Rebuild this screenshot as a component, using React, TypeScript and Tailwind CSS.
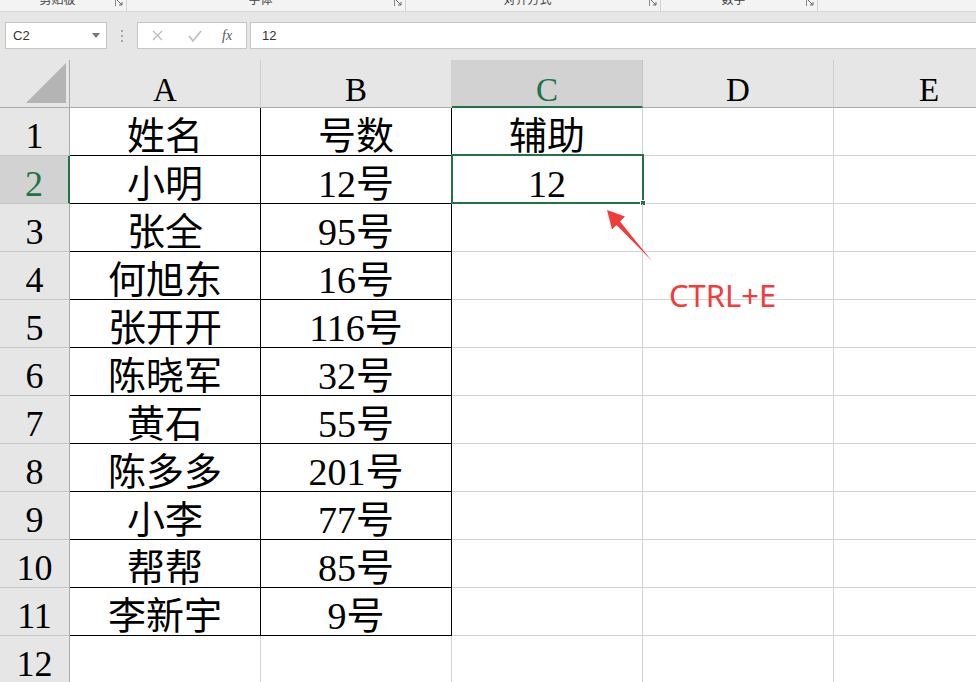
import React from "react";

const rows: [string, string, string][] = [
  ["姓名", "号数", "辅助"],
  ["小明", "12号", "12"],
  ["张全", "95号", ""],
  ["何旭东", "16号", ""],
  ["张开开", "116号", ""],
  ["陈晓军", "32号", ""],
  ["黄石", "55号", ""],
  ["陈多多", "201号", ""],
  ["小李", "77号", ""],
  ["帮帮", "85号", ""],
  ["李新宇", "9号", ""],
  ["", "", ""],
];

const cellFont = { fontFamily: '"Liberation Serif", "Noto Sans CJK SC", serif' };

function Group({ label, width }: { label: string; width: string }) {
  return (
    <div className={`flex h-full items-start border-r border-[#d2d2d2] ${width}`}>
      <div className="-mt-[7px] flex-1 text-center text-[12px] leading-[12px] text-[#444]">{label}</div>
      <div className="mr-[3px] flex h-[6px] w-[8px] items-end border-l border-[#8a8a8a]">
        <svg width="7" height="6" viewBox="0 0 7 6">
          <path d="M1 0 L6 5 M3 5 L6 5 L6 2" stroke="#666" strokeWidth="1" fill="none" />
        </svg>
      </div>
    </div>
  );
}

export default function App() {
  return (
    <div
      className="relative h-[682px] w-[976px] overflow-hidden bg-white"
      style={{ fontFamily: '"Noto Sans CJK SC", "Liberation Sans", sans-serif' }}
    >
      {/* ribbon strip */}
      <div className="flex h-[12px] overflow-hidden border-b border-[#d6d6d6] bg-[#f3f3f3]">
        <Group label="剪贴板" width="w-[127px]" />
        <Group label="字体" width="w-[279px]" />
        <Group label="对齐方式" width="w-[255px]" />
        <Group label="数字" width="w-[157px]" />
      </div>

      {/* formula bar */}
      <div className="flex h-[48px] items-start bg-[#e6e6e6] pt-[10px]">
        <div className="ml-[5px] flex h-[27px] w-[102px] items-center justify-between border border-[#c6c6c6] bg-white pl-[7px] pr-[6px]">
          <span className="text-[13px] text-[#333]" style={{ fontFamily: '"Liberation Sans", sans-serif' }}>
            C2
          </span>
          <svg width="8" height="5" viewBox="0 0 8 5">
            <path d="M0 0 L8 0 L4 5 Z" fill="#777" />
          </svg>
        </div>
        <div className="ml-[13px] flex h-[27px] w-[4px] flex-col items-center justify-center gap-[3px]">
          <div className="h-[2px] w-[2px] bg-[#a8a8a8]" />
          <div className="h-[2px] w-[2px] bg-[#a8a8a8]" />
          <div className="h-[2px] w-[2px] bg-[#a8a8a8]" />
        </div>
        <div className="ml-[13px] flex h-[27px] w-[110px] items-center border border-[#c6c6c6] bg-white">
          <svg className="ml-[14px]" width="11" height="11" viewBox="0 0 11 11">
            <path d="M1 1 L10 10 M10 1 L1 10" stroke="#bdbdbd" strokeWidth="1.3" />
          </svg>
          <svg className="ml-[25px]" width="14" height="12" viewBox="0 0 14 12">
            <path d="M1 6 L5 11 L13 1" stroke="#bdbdbd" strokeWidth="1.6" fill="none" />
          </svg>
          <span
            className="ml-[20px] text-[14px] italic text-[#555]"
            style={{ fontFamily: '"Liberation Serif", serif' }}
          >
            fx
          </span>
        </div>
        <div className="ml-[3px] flex h-[27px] flex-1 items-center border border-r-0 border-[#c6c6c6] bg-white pl-[11px]">
          <span className="text-[13px] text-[#333]" style={{ fontFamily: '"Liberation Sans", sans-serif' }}>
            12
          </span>
        </div>
      </div>

      {/* sheet */}
      <div className="grid w-[1025px] grid-cols-[70px_191px_191px_191px_191px_191px] auto-rows-[48px]" style={cellFont}>
        {/* header row */}
        <div className="relative border-r border-b border-[#ababab] bg-[#e6e6e6]">
          <div className="absolute bottom-[4px] right-[3px] h-0 w-0 border-b-[40px] border-l-[40px] border-b-[#b4b4b4] border-l-transparent" />
        </div>
        {["A", "B", "C", "D", "E"].map((c) => {
          const sel = c === "C";
          return (
            <div
              key={c}
              className={
                sel
                  ? "flex items-end justify-center border-r border-b-2 border-r-[#c6c6c6] border-b-[#217346] bg-[#d2d2d2] text-[33px] leading-none text-[#217346]"
                  : "flex items-end justify-center border-r border-b border-r-[#d0d0d0] border-b-[#ababab] bg-[#e6e6e6] text-[33px] leading-none text-black"
              }
            >
              <span className={sel ? "mb-[-1px]" : ""}>{c}</span>
            </div>
          );
        })}

        {rows.map((r, i) => {
          const n = i + 1;
          const selRow = n === 2;
          const inTable = n <= 11;
          return (
            <React.Fragment key={n}>
              <div
                className={
                  selRow
                    ? "flex items-end justify-center border-r-2 border-b border-r-[#217346] border-b-[#c4c4c4] bg-[#d2d2d2] text-[36px] leading-none text-[#217346]"
                    : "flex items-end justify-center border-r border-b border-r-[#ababab] border-b-[#c4c4c4] bg-[#e6e6e6] text-[36px] leading-none text-black"
                }
              >
                <span className="mb-[1px]">{n}</span>
              </div>
              <div
                className={
                  inTable
                    ? "flex items-end justify-center border-r border-b border-black text-[38px] leading-none text-black"
                    : "flex items-end justify-center border-r border-b border-[#d4d4d4] text-[38px] leading-none text-black"
                }
              >
                {r[0]}
              </div>
              <div
                className={
                  inTable
                    ? "flex items-end justify-center border-r border-b border-black text-[38px] leading-none text-black"
                    : "flex items-end justify-center border-r border-b border-[#d4d4d4] text-[38px] leading-none text-black"
                }
              >
                {r[1]}
              </div>
              <div className="relative flex items-end justify-center border-r border-b border-[#d4d4d4] text-[38px] leading-none text-black">
                {r[2]}
                {selRow && (
                  <div className="absolute -left-[1px] -top-[2px] -right-[2px] -bottom-[1px] border-2 border-[#217346]">
                    <div className="absolute -bottom-[4px] -right-[4px] h-[6px] w-[6px] border border-white bg-[#217346]" />
                  </div>
                )}
              </div>
              <div className="border-r border-b border-[#d4d4d4]" />
              <div className="border-r border-b border-[#d4d4d4]" />
            </React.Fragment>
          );
        })}
      </div>

      {/* annotation arrow */}
      <svg className="pointer-events-none absolute left-0 top-0" width="976" height="682" viewBox="0 0 976 682">
        <polygon points="607,210 625,216.5 620,221.5 652,261 616.5,225 612,229.5" fill="#f23c3c" />
      </svg>
      <div
        className="absolute left-[669px] top-[280px] text-[31px] leading-none text-[#f23c3c]"
        style={{ fontFamily: '"Noto Sans", "Liberation Sans", sans-serif' }}
      >
        CTRL+E
      </div>
    </div>
  );
}
